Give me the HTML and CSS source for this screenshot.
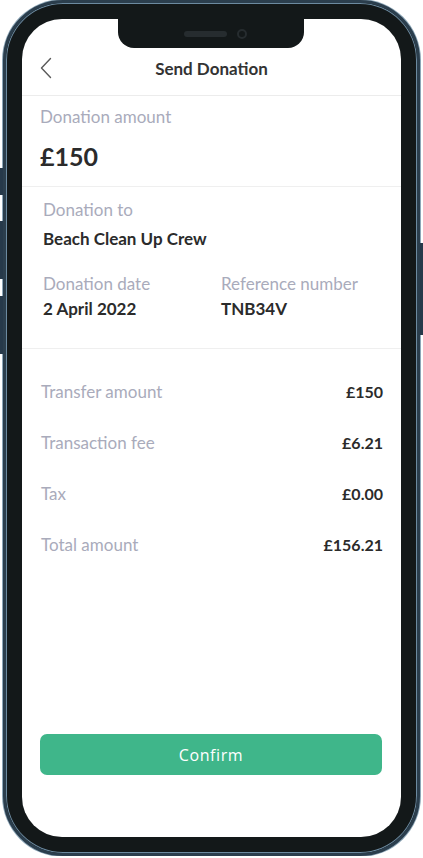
FILE: index.html
```html
<!DOCTYPE html>
<html lang="en">
<head>
    <meta charset="UTF-8">
    <meta name="viewport" content="width=device-width, initial-scale=1.0">
    <title>Send Donation</title>
    <link rel="stylesheet" href="styles.css">
</head>
<body>
    <div class="phone">
        <span class="side-btn left b1"></span>
        <span class="side-btn left b2"></span>
        <span class="side-btn left b3"></span>
        <span class="side-btn right b4"></span>

        <div class="screen">
            <div class="notch">
                <span class="speaker"></span>
                <span class="camera"></span>
            </div>

            <header class="top-bar">
                <svg class="back" width="12" height="22" viewBox="0 0 12 22">
                    <path d="M10.5 1.5 L1.5 11 L10.5 20.5" fill="none" stroke="#5a5a5a" stroke-width="1.4" stroke-linecap="round" stroke-linejoin="round"/>
                </svg>
                <h1>Send Donation</h1>
            </header>

            <section class="amount">
                <p class="label">Donation amount</p>
                <p class="big">£150</p>
            </section>

            <section class="details">
                <p class="label">Donation to</p>
                <p class="value org">Beach Clean Up Crew</p>
                <div class="cols">
                    <div>
                        <p class="label">Donation date</p>
                        <p class="value small-gap">2 April 2022</p>
                    </div>
                    <div>
                        <p class="label">Reference number</p>
                        <p class="value small-gap">TNB34V</p>
                    </div>
                </div>
            </section>

            <section class="summary">
                <div class="row"><span class="label">Transfer amount</span><span class="value">£150</span></div>
                <div class="row"><span class="label">Transaction fee</span><span class="value">£6.21</span></div>
                <div class="row"><span class="label">Tax</span><span class="value">£0.00</span></div>
                <div class="row"><span class="label">Total amount</span><span class="value">£156.21</span></div>
            </section>

            <button class="confirm" type="button">Confirm</button>
        </div>
    </div>
</body>
</html>
```

FILE: styles.css
```css
body {
    margin: 0;
    padding: 0;
    background-color: #fff;
    font-family: Lato, "Open Sans", sans-serif;
}
p {
    margin: 0;
}
.phone {
    position: relative;
    width: 417px;
    height: 856px;
    margin-left: 3px;
    box-sizing: border-box;
    padding: 16px;
    border: 3px solid #2b3e4d;
    border-radius: 60px;
    background-color: #131819;
    box-shadow: inset 0 0 0 1px #6c8aa0, 0 0 0 1px #8ea7b8;
}
.side-btn {
    position: absolute;
    width: 3px;
    background-color: #26394a;
}
.side-btn.left {
    left: -6px;
}
.side-btn.right {
    right: -6px;
}
.b1 { top: 165px; height: 27px; }
.b2 { top: 218px; height: 58px; }
.b3 { top: 293px; height: 58px; }
.b4 { top: 240px; height: 92px; }

.screen {
    position: relative;
    height: 100%;
    background-color: #fff;
    border-radius: 40px;
    overflow: hidden;
    display: flex;
    flex-direction: column;
}
.notch {
    position: absolute;
    top: 0;
    left: 96px;
    width: 186px;
    height: 29px;
    background-color: #131819;
    border-radius: 0 0 16px 16px;
    display: flex;
    align-items: center;
    justify-content: center;
    gap: 10px;
}
.speaker {
    width: 43px;
    height: 6px;
    border-radius: 3px;
    background-color: #262c2f;
    margin-left: 8px;
}
.camera {
    width: 10px;
    height: 10px;
    border-radius: 50%;
    border: 2px solid #262c2f;
    box-sizing: border-box;
}

.top-bar {
    position: relative;
    padding: 40px 0 16px;
    border-bottom: 1px solid #ececec;
    text-align: center;
}
.top-bar h1 {
    margin: 0;
    font-size: 17px;
    line-height: 20px;
    font-weight: 700;
    color: #333;
}
.back {
    position: absolute;
    left: 18px;
    top: 38px;
}

.label {
    font-size: 17px;
    line-height: 20px;
    color: #a9abbb;
}
.value {
    font-size: 17px;
    line-height: 20px;
    font-weight: 700;
    color: #2b2b2b;
}

.amount {
    padding: 11px 18px 15px;
    border-bottom: 1px solid #efefef;
}
.big {
    margin-top: 14px;
    font-size: 25px;
    line-height: 30px;
    font-weight: 700;
    color: #2b2b2b;
}

.details {
    padding: 13px 21px 29px;
    border-bottom: 1px solid #efefef;
}
.org {
    margin-top: 9px;
}
.cols {
    display: grid;
    grid-template-columns: 178px 1fr;
    margin-top: 25px;
}
.small-gap {
    margin-top: 5px;
}

.summary {
    padding: 33px 18px 0 19px;
    display: flex;
    flex-direction: column;
    gap: 31px;
}
.row {
    display: flex;
    justify-content: space-between;
    align-items: center;
}
.row .value {
    font-size: 16px;
}

.confirm {
    margin: auto 19px 62px 18px;
    height: 41px;
    border: none;
    border-radius: 7px;
    background-color: #3fb68a;
    color: #fff;
    font-family: "Open Sans", sans-serif;
    font-size: 16px;
    letter-spacing: 0.6px;
    cursor: pointer;
}
```
